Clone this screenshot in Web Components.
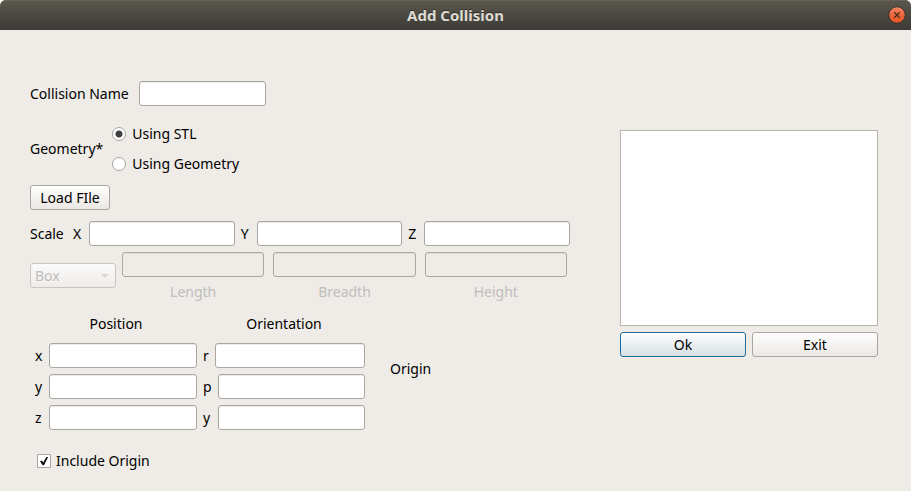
<!DOCTYPE html>
<html lang="en">
<head>
<meta charset="utf-8">
<title>Add Collision</title>
<style>
html, body { margin: 0; background: #fff; }
body { font: 14px/20px "Noto Sans", "Open Sans", sans-serif; color: #000; }
</style>
</head>
<body>
<collision-dialog></collision-dialog>
<script>
const controls = `
  *, *::before { box-sizing: border-box; }
  input, button, select { font: inherit; color: inherit; margin: 0; }
`;

function define(name, markup, setup) {
  const template = document.createElement('template');
  template.innerHTML = markup;
  customElements.define(name, class extends HTMLElement {
    constructor() {
      super();
      this.attachShadow({ mode: 'open' }).append(template.content.cloneNode(true));
    }
    connectedCallback() {
      if (setup) setup(this, this.shadowRoot);
    }
  });
}

define('title-bar', `
  <style>
    ${controls}
    :host { display: grid; grid-template-columns: 1fr auto 1fr; align-items: center; height: 30px; padding: 0 5px;
      background: linear-gradient(#5b574c, #3c3b37); border-radius: 6px 6px 0 0;
      box-shadow: inset 0 1px #66645a; color: #dfdbd2; }
    h1 { grid-column: 2; margin: 0; font-size: 15px; line-height: 20px; font-weight: 700; text-shadow: 0 -1px #2e2d29; }
    button { justify-self: end; width: 18px; height: 18px; padding: 0; border: 0; background: none; }
    svg { display: block; }
  </style>
  <h1><slot></slot></h1>
  <button type="button" aria-label="Close">
    <svg width="18" height="18" viewBox="0 0 18 18">
      <defs><linearGradient id="g" x2="0" y2="1"><stop stop-color="#f38763"/><stop offset=".5" stop-color="#ee6740"/><stop offset="1" stop-color="#e2541c"/></linearGradient></defs>
      <circle cx="9" cy="9" r="8.3" fill="url(#g)" stroke="#33322d"/>
      <path d="M6.3 6.3l5.4 5.4M11.7 6.3l-5.4 5.4" stroke="#4a2c1a" stroke-width="1.3"/>
    </svg>
  </button>
`);

define('text-field', `
  <style>
    ${controls}
    :host { display: flex; align-items: center; gap: var(--gap, 6px); min-width: 0; }
    :host([below]) { flex-direction: column-reverse; gap: 5px; }
    label { flex: none; min-width: var(--label, 0); white-space: nowrap; }
    input { flex: 1; width: 100%; min-width: 0; height: 25px; padding: 0 5px; border: 1px solid #aaa7a2; border-radius: 3px;
      background: #fff; box-shadow: inset 0 1px #ececea; outline: 0; }
    :host([below]) input { flex: none; }
    :host([disabled]) { color: #bebebe; }
    input:disabled { background: #efebe6; box-shadow: inset 0 1px #e2deda; }
  </style>
  <label for="i"><slot></slot></label><input id="i" type="text">
`, (host, root) => { root.querySelector('input').disabled = host.hasAttribute('disabled'); });

define('push-button', `
  <style>
    ${controls}
    :host { display: block; }
    button { display: block; width: 100%; height: 25px; padding: 0 8px; line-height: 20px; white-space: nowrap;
      border: 1px solid #aaa7a2; border-radius: 3px; background: linear-gradient(#fefefe, #ebe8e4); }
    :host([primary]) button { border-color: #1f6d9c; background: linear-gradient(#fdfefe, #d7e0e3); }
  </style>
  <button type="button"><slot></slot></button>
`);

define('geometry-choice', `
  <style>
    ${controls}
    :host { display: flex; align-items: center; gap: 9px; }
    .options { display: grid; gap: 10px; }
    label { display: flex; align-items: center; gap: 6px; }
    input { appearance: none; width: 14px; height: 14px; border: 1px solid #a8a5a1; border-radius: 50%; background: #fff; }
    input:checked { background: radial-gradient(circle, #3e3e3e 3px, #fff 4px); }
  </style>
  <span id="name"><slot></slot></span>
  <div class="options" role="radiogroup" aria-labelledby="name">
    <label><input type="radio" name="geometry" checked>Using STL</label>
    <label><input type="radio" name="geometry">Using Geometry</label>
  </div>
`);

define('shape-picker', `
  <style>
    ${controls}
    :host { display: grid; align-items: center; color: #bebebe; }
    select, svg { grid-area: 1 / 1; }
    select { appearance: none; width: 100%; height: 25px; padding: 0 4px; opacity: 1; color: #bebebe;
      border: 1px solid #c9c6c2; border-radius: 3px; background: linear-gradient(#fcfbfb, #efebe7); }
    svg { justify-self: end; margin-right: 7px; pointer-events: none; }
  </style>
  <select aria-label="Shape" disabled><option>Box</option></select>
  <svg width="8" height="4" viewBox="0 0 8 4"><path d="M0 0h8L4 4z" fill="#d8d6d3"/></svg>
`);

define('axis-group', `
  <style>
    :host { display: grid; gap: 6px; min-width: 0; }
    h2 { margin: 0 0 3px; font: inherit; text-align: center; }
  </style>
  <h2><slot name="title"></slot></h2><slot></slot>
`);

define('check-option', `
  <style>
    ${controls}
    :host { display: flex; }
    label { display: flex; align-items: center; gap: 5px; }
    span { display: grid; }
    input, svg { grid-area: 1 / 1; }
    input { appearance: none; width: 14px; height: 14px; border: 1px solid #aaa7a2; background: #fff; }
    svg { pointer-events: none; visibility: hidden; }
    input:checked + svg { visibility: visible; }
  </style>
  <label><span><input type="checkbox" checked><svg width="14" height="14" viewBox="0 0 14 14"><path d="M3 7.2l2-.7 1.2 2L9.3 3h1.8L7 11.3H5.6z" fill="#111"/></svg></span><slot></slot></label>
`);

define('collision-dialog', `
  <style>
    :host { display: flex; flex-direction: column; min-height: 100vh; }
    main { flex: 1; display: grid; grid-template-columns: minmax(0, 540fr) minmax(0, 258fr); gap: 50px; align-items: start;
      padding: 51px 33px 19px 30px; background: #efebe6; }
    form { display: grid; }
    .name { width: 236px; --label: 103px; }
    geometry-choice { margin-top: 18px; }
    .load { margin-top: 11px; width: 80px; }
    .scale { display: grid; grid-template-columns: auto repeat(3, minmax(0, 1fr)); gap: 6px; align-items: center; margin-top: 11px; --label: 10px; }
    .scale > span { min-width: 37px; }
    .size { display: grid; grid-template-columns: 86px minmax(0, 1fr); gap: 6px; align-items: center; margin: 6px 3px 0 0; }
    shape-picker { padding-bottom: 3px; }
    .dims { display: grid; grid-template-columns: repeat(3, minmax(0, 1fr)); gap: 9px; }
    .origin { display: grid; grid-template-columns: repeat(2, minmax(0, 162fr)) minmax(0, 199fr); gap: 6px; align-items: center; margin: 12px 0 0 5px; }
    .origin > span { padding: 0 0 6px 19px; }
    .x { --label: 8px; }
    .r { --label: 6px; }
    .p { --label: 9px; }
    check-option { margin: 21px 0 0 7px; }
    aside { display: grid; grid-template-columns: 1fr 1fr; gap: 6px; margin-top: 49px; }
    .preview { grid-column: 1 / 3; box-sizing: border-box; height: 196px; border: 1px solid #b8b4b1; background: #fff; }
  </style>
  <title-bar>Add Collision</title-bar>
  <main>
    <form>
      <text-field class="name">Collision Name</text-field>
      <geometry-choice>Geometry*</geometry-choice>
      <push-button class="load">Load FIle</push-button>
      <div class="scale"><span>Scale</span><text-field>X</text-field><text-field>Y</text-field><text-field>Z</text-field></div>
      <div class="size">
        <shape-picker></shape-picker>
        <div class="dims">
          <text-field below disabled>Length</text-field>
          <text-field below disabled>Breadth</text-field>
          <text-field below disabled>Height</text-field>
        </div>
      </div>
      <div class="origin">
        <axis-group><span slot="title">Position</span><text-field class="x">x</text-field><text-field class="x">y</text-field><text-field class="x">z</text-field></axis-group>
        <axis-group><span slot="title">Orientation</span><text-field class="r">r</text-field><text-field class="p">p</text-field><text-field class="p">y</text-field></axis-group>
        <span>Origin</span>
      </div>
      <check-option>Include Origin</check-option>
    </form>
    <aside>
      <div class="preview"></div>
      <push-button primary>Ok</push-button>
      <push-button>Exit</push-button>
    </aside>
  </main>
`);
</script>
</body>
</html>
